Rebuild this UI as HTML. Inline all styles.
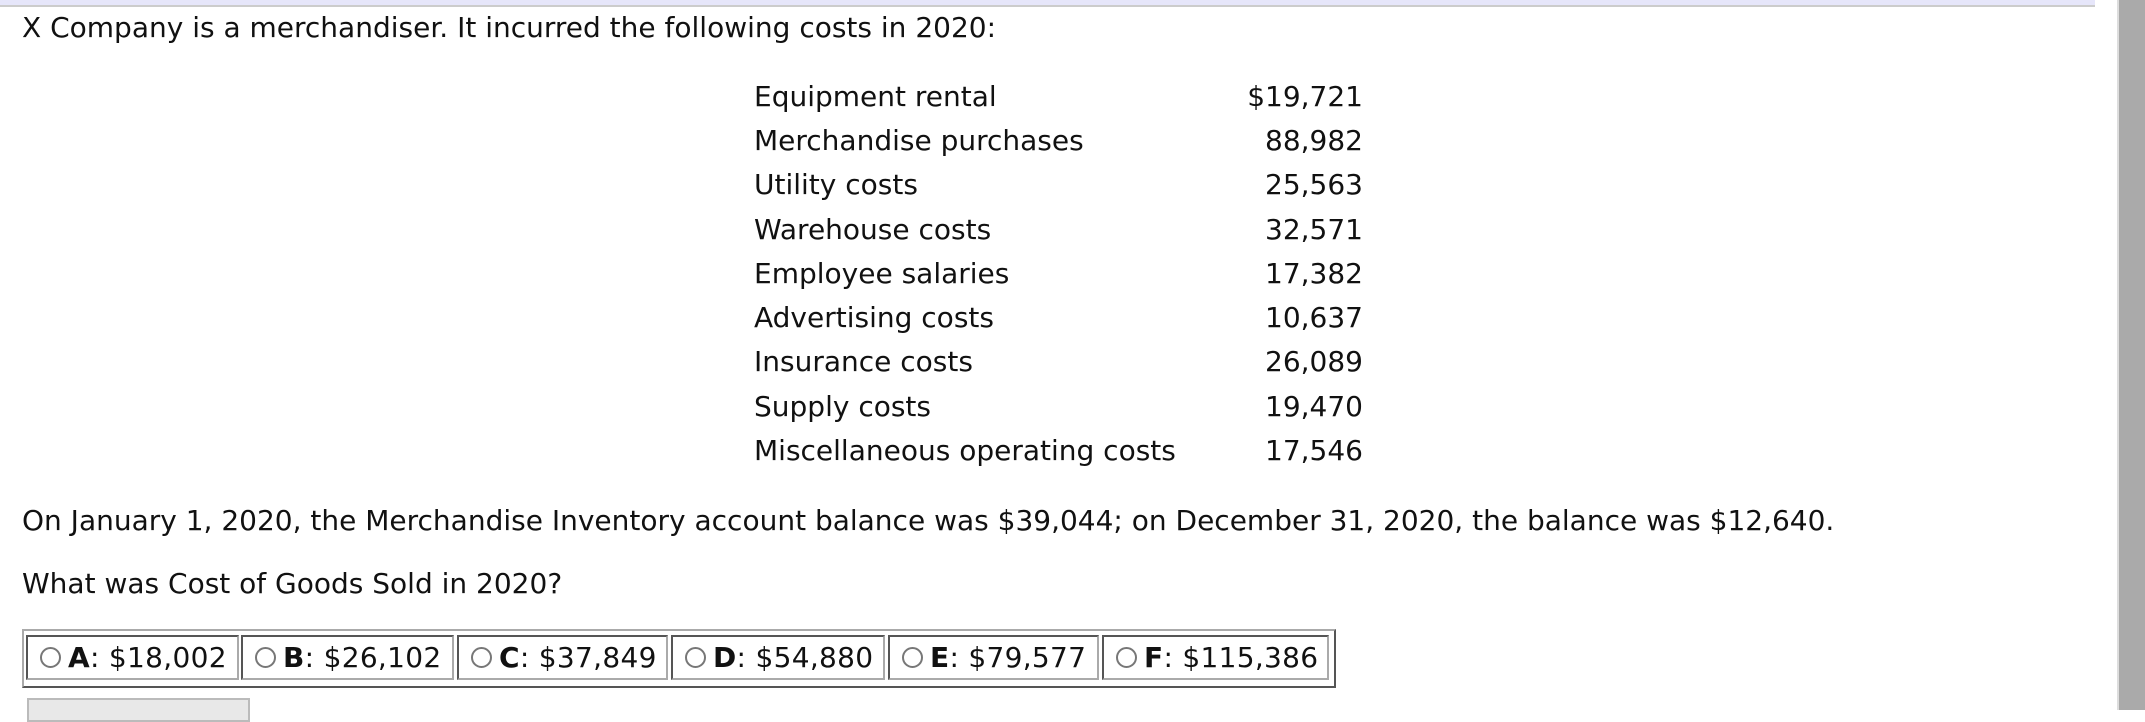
<!DOCTYPE html>
<html><head><style>
body{margin:0;width:2145px;height:710px;overflow:hidden;background:#fff;font-family:"DejaVu Sans","Liberation Sans",sans-serif;font-size:28px;color:#111;position:relative}
.bar{position:absolute;left:0;top:0;width:2095px;height:5px;background:#e6e6fa;border-bottom:2px solid #ccc}
.sb{position:absolute;left:2117px;top:0;width:28px;height:710px;background:#aaa;border-left:2px solid #ddd}
.t{position:absolute;white-space:nowrap;line-height:32px}
.r{position:absolute;text-align:right;width:200px;left:1163px;white-space:nowrap;line-height:32px}
.box{position:absolute;left:22px;top:629px;width:1310px;height:55px;border:2px solid #555;border-top-color:#aaa;border-left-color:#aaa}
.opt{position:absolute;top:4px;height:45px;border:2px solid #555;border-right-color:#aaa;border-bottom-color:#aaa;box-sizing:border-box;line-height:42px;white-space:nowrap;font-size:28px;letter-spacing:0.3px}
.rad{display:inline-block;width:21px;height:21px;border:2px solid #777;border-radius:50%;box-sizing:border-box;vertical-align:-1px;margin:0 7px 0 12px;background:#fff}
.btn{position:absolute;left:27px;top:698px;width:219px;height:20px;background:#e8e8e8;border:2px solid #bbb}
</style></head><body>
<div class="bar"></div><div class="sb"></div>
<div class="t" style="left:22px;top:12px">X Company is a merchandiser. It incurred the following costs in 2020:</div>
<div class="t" style="left:754px;top:81px">Equipment rental</div><div class="r" style="top:81px">$19,721</div>
<div class="t" style="left:754px;top:125px">Merchandise purchases</div><div class="r" style="top:125px">88,982</div>
<div class="t" style="left:754px;top:169px">Utility costs</div><div class="r" style="top:169px">25,563</div>
<div class="t" style="left:754px;top:214px">Warehouse costs</div><div class="r" style="top:214px">32,571</div>
<div class="t" style="left:754px;top:258px">Employee salaries</div><div class="r" style="top:258px">17,382</div>
<div class="t" style="left:754px;top:302px">Advertising costs</div><div class="r" style="top:302px">10,637</div>
<div class="t" style="left:754px;top:346px">Insurance costs</div><div class="r" style="top:346px">26,089</div>
<div class="t" style="left:754px;top:391px">Supply costs</div><div class="r" style="top:391px">19,470</div>
<div class="t" style="left:754px;top:435px">Miscellaneous operating costs</div><div class="r" style="top:435px">17,546</div>
<div class="t" style="left:22px;top:505px">On January 1, 2020, the Merchandise Inventory account balance was $39,044; on December 31, 2020, the balance was $12,640.</div>
<div class="t" style="left:22px;top:568px">What was Cost of Goods Sold in 2020?</div>
<div class="box">
<div class="opt" style="left:2px;width:213px"><span class="rad"></span><b>A</b>: $18,002</div>
<div class="opt" style="left:217px;width:213px"><span class="rad"></span><b>B</b>: $26,102</div>
<div class="opt" style="left:433px;width:211px"><span class="rad"></span><b>C</b>: $37,849</div>
<div class="opt" style="left:647px;width:214px"><span class="rad"></span><b>D</b>: $54,880</div>
<div class="opt" style="left:864px;width:211px"><span class="rad"></span><b>E</b>: $79,577</div>
<div class="opt" style="left:1078px;width:227px"><span class="rad"></span><b>F</b>: $115,386</div>
</div>
<div class="btn"></div>
</body></html>
